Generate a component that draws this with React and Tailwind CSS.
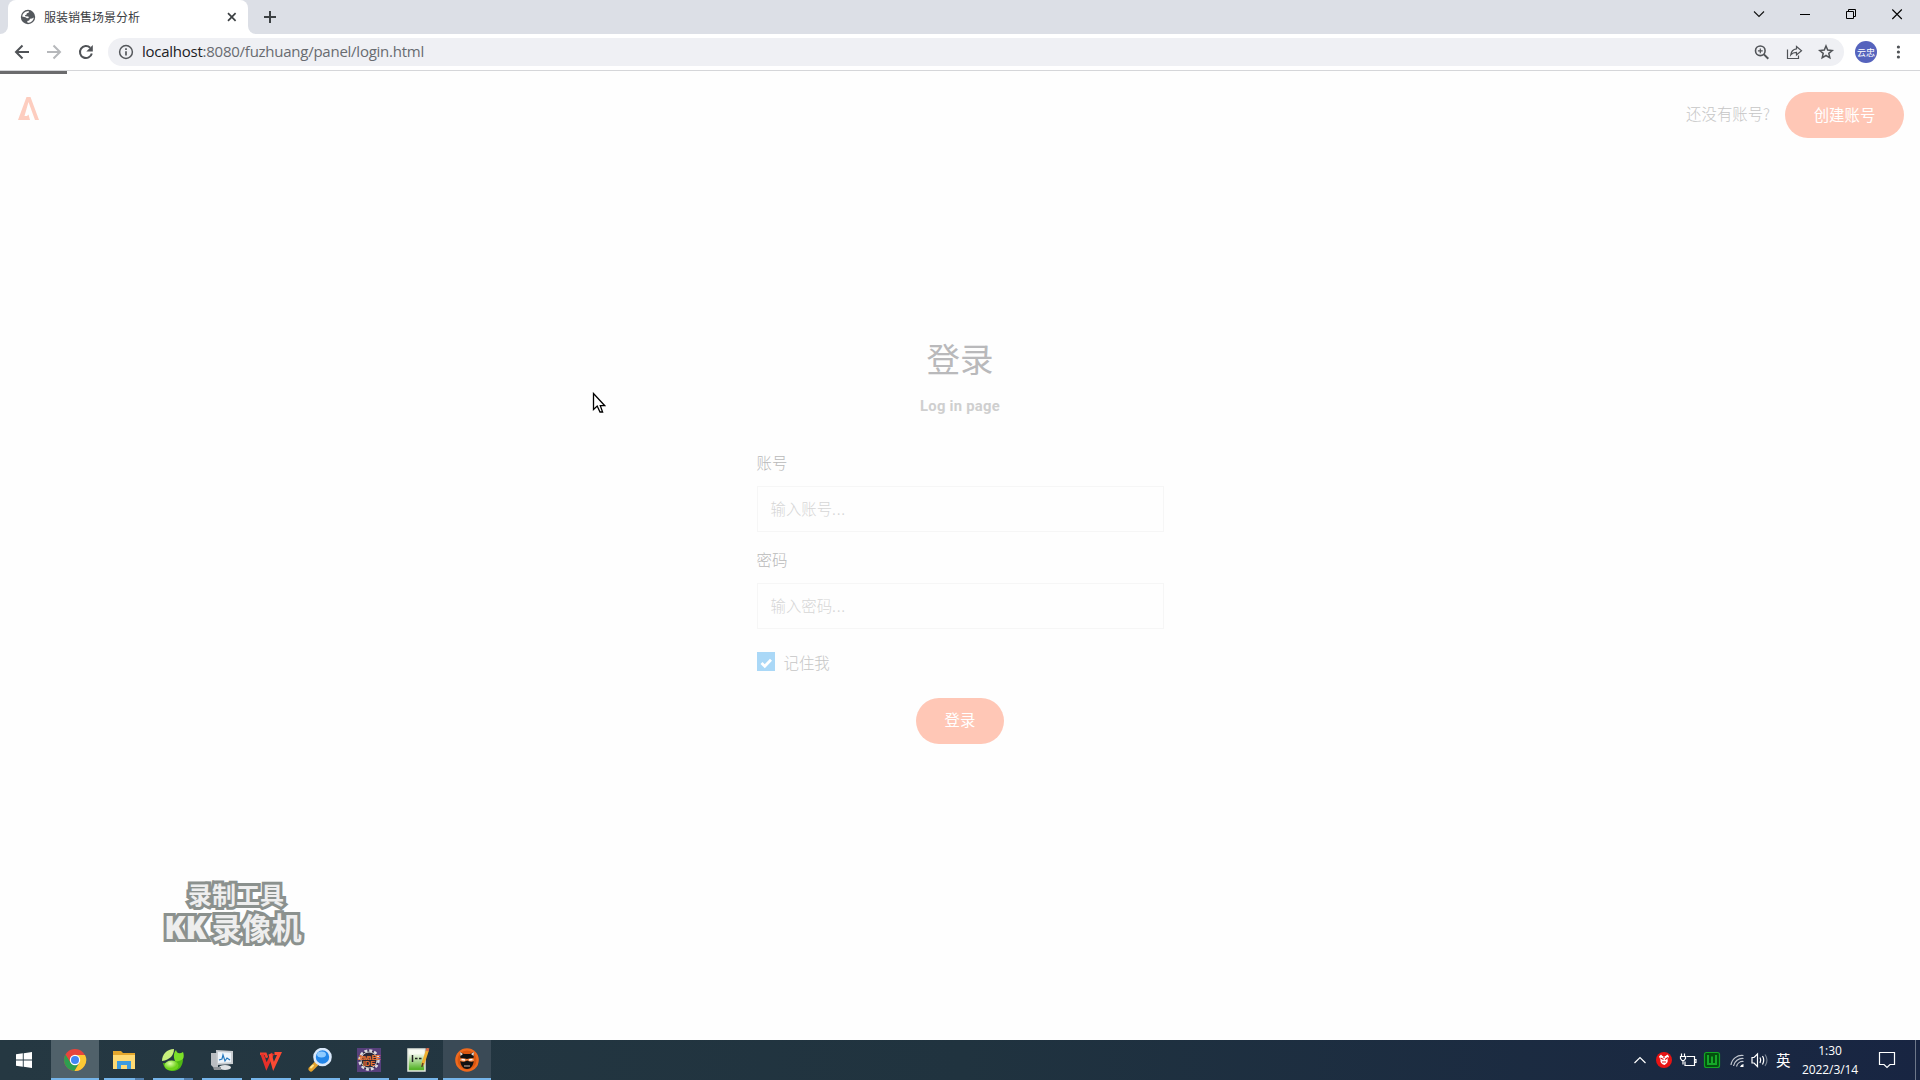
import React from "react";

const CJK = "font-['Noto_Sans_CJK_SC',sans-serif]";

function Globe() {
  return (
    <svg width="16" height="16" viewBox="0 0 16 16">
      <circle cx="8" cy="8" r="7.2" fill="#54585d" />
      <path d="M2.200 7.500C2.400 4.800 4.500 2.500 7.500 2.200L9 2.300L8.600 3.800L6.800 4.200L6.600 5.600L5 6.200L5.200 7.200L8.400 7.600L8.800 9L7 9.200L5.400 8.300z" fill="#fff" />
      <path d="M13.800 8.500C13.600 11.500 11 13.800 7.600 13.800L7.200 12L9.200 11.400L10 9.800L12 9.400z" fill="#fff" />
    </svg>
  );
}

function TabStrip() {
  return (
    <div className="flex h-[34px] bg-[#dcdfe6]">
      <div className="flex w-2 items-end bg-white">
        <div className="h-[34px] w-2 rounded-br-lg bg-[#dcdfe6]" />
      </div>
      <div className="flex w-[240px] items-center rounded-t-lg bg-white pl-3">
        <Globe />
        <span className="ml-[8px] w-[180px] whitespace-nowrap text-[12px] leading-[34px] text-[#3c4043] font-['Noto_Sans_CJK_SC',sans-serif]">服装销售场景分析</span>
        <svg width="14" height="14" viewBox="0 0 14 14" fill="none" stroke="#3c4043" strokeWidth="1.700"><path d="M4 3.200l7.600 7.600M11.600 3.200l-7.600 7.600" /></svg>
      </div>
      <div className="w-2 bg-white"><div className="h-[34px] w-2 rounded-bl-lg bg-[#dcdfe6]" /></div>
      <div className="flex items-center pl-[7px]">
        <svg width="14" height="14" viewBox="0 0 14 14" stroke="#3c4043" strokeWidth="2"><path d="M7 1v12M1 7h12" /></svg>
      </div>
      <div className="ml-auto flex h-[28px] items-center">
        <svg width="46" height="28" fill="none" stroke="#111" strokeWidth="1.100"><path d="M18 11.500l5 5l5-5" /></svg>
        <svg width="46" height="28" fill="none" stroke="#000"><path d="M18 14.500h10" /></svg>
        <svg width="46" height="28" fill="none" stroke="#000"><path d="M18.500 11.500h7v7h-7zM20.500 11.500v-2h7v7h-2" /></svg>
        <svg width="46" height="28" fill="none" stroke="#000" strokeWidth="1.100"><path d="M18.300 9.500l9.500 9.500M27.800 9.500l-9.500 9.500" /></svg>
      </div>
    </div>
  );
}

function Toolbar() {
  return (
    <div className="flex h-[37px] items-center border-b border-[#d5d6d9] bg-white">
      <svg width="108" height="36" fill="none" stroke="#505357" strokeWidth="2">
        <path d="M29 18H16.500M22.500 11.500L16 18l6.500 6.500" />
        <path d="M47 18h12.500M53.500 11.500L60 18l-6.500 6.500" stroke="#b6b8bb" />
        <path d="M90.200 13.800A6 6 0 1 0 91.800 19.500" />
        <path d="M92.800 11v6.500h-6.500z" fill="#505357" stroke="none" />
      </svg>
      <div className="flex h-7 w-[1736px] items-center rounded-full bg-[#eff0f4] pl-[10px]">
        <svg width="16" height="16" fill="none" stroke="#54575b" strokeWidth="1.500"><circle cx="8" cy="8" r="6.400" /><path d="M8 7.200v4.300M8 4.300v1.700" strokeWidth="1.700" /></svg>
        <span className="mb-0.5 ml-2 whitespace-nowrap text-[15px] leading-[26px] tracking-[-0.25px] text-[#686b70] font-['Open_Sans',sans-serif]"><span className="text-[#202124]">localhost</span>:8080/fuzhuang/panel/login.html</span>
        <svg width="94" height="28" className="ml-auto" fill="none" stroke="#505357" strokeWidth="1.600">
          <circle cx="10.300" cy="12.800" r="4.800" /><path d="M13.900 16.400l4.400 4.400" strokeWidth="2" /><path d="M10.300 10.400v4.800M7.900 12.800h4.800" strokeWidth="1.200" />
          <path d="M37.500 11.500v9h11v-3" strokeWidth="1.200" /><path d="M46.500 8.500l5 4.200l-5 4.200v-2.500c-2.600 0-4.300.7-5.800 2.600c.4-3.400 2.300-5.800 5.800-6.200z" strokeWidth="1.200" />
          <path d="M76 8l1.700 4.100l4.500.4l-3.400 2.900l1 4.400l-3.800-2.300l-3.800 2.300l1-4.400l-3.400-2.900l4.500-.4z" strokeWidth="1.500" />
        </svg>
      </div>
      <div className={`ml-[11px] flex size-[22px] items-center justify-center whitespace-nowrap rounded-full bg-[#5563bd] text-[9px] leading-none text-white ${CJK}`}>云忠</div>
      <svg width="8" height="18" className="ml-[17px]" fill="#505357"><circle cx="4.400" cy="4" r="1.600" /><circle cx="4.400" cy="9" r="1.600" /><circle cx="4.400" cy="14" r="1.600" /></svg>
    </div>
  );
}

function Field({ label, hint }) {
  return (
    <label className="flex flex-col">
      <span className="h-[20px] text-[15.4px] leading-[20px] text-[#b9b9b9]">{label}</span>
      <span className="mt-[14px] flex h-[46px] items-center border border-[#f6f6f6] px-[13px] text-[15.4px] text-[#d6d6d6]">{hint.slice(0, 4)}<span className="tracking-[0.8px]">{hint.slice(4)}</span></span>
    </label>
  );
}

function LoginPage() {
  return (
    <main className={`relative flex h-[969px] flex-col bg-[#fefefe] font-light ${CJK}`}>
      <div className="h-[3px] w-[67px] bg-[#6b6b6d]" />
      <header className="flex h-[64px] items-end justify-between pl-[17px] pr-4">
        <svg width="24" height="26" viewBox="0 0 24 26" className="mb-[16px]"><path d="M9.500 1h4L22 24h-4L11.500 6L7.500 20H10l1.500-1.500L13 24H1z" fill="#fdcdbf" /></svg>
        <div className="flex items-center">
          <span className="mb-[3px] mr-[15px] text-[15.400px] text-[#c6c6c6]">还没有账号?</span>
          <button className="h-[46px] w-[119px] rounded-full bg-[#ffc7b6] pb-[2px] text-[15.400px] font-normal leading-[44px] text-white">创建账号</button>
        </div>
      </header>
      <form className="mx-auto mt-[197px] flex w-[407px] flex-col">
        <h1 className="h-[46px] text-center text-[33.500px] font-normal leading-[46px] text-[#b9b9bb]">登录</h1>
        <p className="mt-[13px] h-6 text-center text-[14.800px] font-bold leading-6 tracking-[0.250px] text-[#cfcfcf] font-['Roboto',sans-serif]">Log in page</p>
        <div className="mt-[34px] flex flex-col gap-[17px]">
          <Field label="账号" hint="输入账号..." />
          <Field label="密码" hint="输入密码..." />
        </div>
        <label className="mt-[22px] flex h-6 items-center text-[15.400px] text-[#c6c6c6]">
          <svg width="18" height="19" className="mb-[3px] mr-[9px]"><path d="M0 0h18v19H0z" fill="#aad8f7" /><path d="M4.500 11l3.300 3.300l6.200-6.500" fill="none" stroke="#fff" strokeWidth="2.800" /></svg>
          记住我
        </label>
        <button type="button" className="mx-auto mt-[23px] h-[46px] w-[88px] rounded-full bg-[#ffc7b6] pb-[3px] text-[15.400px] font-normal leading-[43px] text-white">登录</button>
      </form>
      <div className="absolute left-[160px] top-[807px] flex w-[146px] flex-col items-center whitespace-nowrap font-bold text-[#eeeeee] [-webkit-text-stroke:6px_#8b918e] [paint-order:stroke_fill] [stroke-linejoin:round]">
        <span className="ml-1.5 text-[24px] leading-[32px]">录制工具</span>
        <span className="flex items-baseline text-[30px] leading-[32px]"><span className="mr-[5px] text-[31px] font-extrabold font-['Open_Sans',sans-serif]">KK</span>录像机</span>
      </div>
      <svg width="14" height="22" viewBox="0 0 14 22" className="absolute left-[592px] top-[321px]"><path d="M1.500 1.500v16l3.700-3.500l2.800 6h2.600l-2.300-6.300h4.500z" fill="#fff" stroke="#000" strokeWidth="1.300" /></svg>
    </main>
  );
}

const apps = [
  { name: "chrome", full: true, tone: "bg-[#50616a]", art: (
    <g><circle cx="12" cy="12" r="11" fill="#e8453c" /><path d="M2.500 6.500A11 11 0 0 0 11.500 23L16.500 14.500L12 12L7.500 14.500z" fill="#2f9e4f" /><path d="M11.500 23A11 11 0 0 0 22 7H12l4.500 7.500z" fill="#fcc934" /><circle cx="12" cy="12" r="5.200" fill="#fff" /><circle cx="12" cy="12" r="4" fill="#4285f4" /></g>) },
  { name: "explorer", split: true, art: (
    <g><path d="M1 3h8l2 2h12v16H1z" fill="#e5a72c" /><path d="M1 7h22v14H1z" fill="#ffda73" /><path d="M5 13h14v8h-4v-4H9v4H5z" fill="#3d9be0" /></g>) },
  { name: "frog", split: true, art: (
    <g><defs><radialGradient id="leaf" cx=".4" cy=".3"><stop stopColor="#e0ffa8" /><stop offset="1" stopColor="#6fd31c" /></radialGradient></defs><path d="M1 13C1 6 6 1 13 1C13 7 9 12 1 13z" fill="#c9f07c" /><path d="M15 2C16 6 19 6 22 4C24 9 22 14 16 15C12 12 12 5 15 2z" fill="#7ce028" /><path d="M2 15c4 1 7-3 10-2c4 1 7 0 10-2c0 7-4 12-10 12S3 20 2 15z" fill="#4fb814" /><ellipse cx="10.500" cy="17.500" rx="7" ry="5" fill="url(#leaf)" /></g>) },
  { name: "monitor", art: (
    <g><path d="M1 5h7v14H3l-2-2z" fill="#b9bdc1" /><path d="M6 2l17 1v13l-16 1z" fill="#c9cdd1" /><path d="M8 4l13 .8v9.500L8 15z" fill="#eef5fb" /><path d="M9 12l3-1l1-4l2 6l2-3l3 2" stroke="#2377bd" fill="none" strokeWidth="1.200" /><ellipse cx="15" cy="19.500" rx="6" ry="2.500" fill="#e0e2e4" /><path d="M3 19h8v3H4z" fill="#8f9498" /></g>) },
  { name: "wps", art: (
    <g fill="none" strokeWidth="3.200"><path d="M1 5.800h5.500l1.500 4" stroke="#ef4130" strokeWidth="2.600" /><path d="M3 6l4.500 12.500l6-13" stroke="#e7302a" /><path d="M11 6l3.500 12.500L20.500 5.500h-5" stroke="#fb4a33" /></g>) },
  { name: "search", art: (
    <g><path d="M8 16l-5 5" stroke="#e2a12d" strokeWidth="5" strokeLinecap="round" /><path d="M5 17.500l-2 2" stroke="#ffe58c" strokeWidth="2" strokeLinecap="round" /><circle cx="14.500" cy="9" r="8" fill="#2386e9" stroke="#d9e8fa" strokeWidth="2.600" /><ellipse cx="13.500" cy="6.500" rx="4.500" ry="3" fill="#8fcbff" /></g>) },
  { name: "javaee", art: (
    <g><path d="M0 0h24v24H0z" fill="#57407c" /><circle cx="12" cy="12" r="9.500" fill="#292636" stroke="#dedbe0" strokeWidth="2.500" strokeDasharray="3 1.970" /><circle cx="12" cy="12" r="8" fill="#292636" stroke="#c9c6cd" /><text x="12" y="11.500" textAnchor="middle" textLength="23" fontSize="7.500" fontWeight="700" fill="#ef7733" fontFamily="Liberation Sans">Java EE</text><text x="12" y="18" textAnchor="middle" fontSize="7.500" fontWeight="700" fill="#ef7733" fontFamily="Liberation Sans">IDE</text></g>) },
  { name: "notepad", art: (
    <g transform="translate(-1 0)"><defs><linearGradient id="pad" x2="0" y2="1"><stop offset=".2" stopColor="#f7faf2" /><stop offset=".9" stopColor="#58b42c" /></linearGradient></defs><path d="M3 1h17v22H3z" fill="url(#pad)" stroke="#e3e7df" strokeWidth="1.500" /><path d="M7.500 7v7M10 10.500h2.500M14 10.500h2.500" stroke="#222" strokeWidth="1.500" /><path d="M22.500 2l-5 15" stroke="#f0b030" strokeWidth="3" /><path d="M18 15l-1.200 4" stroke="#5c4320" strokeWidth="1.500" /><path d="M23 0l-1 3" stroke="#d66b4a" strokeWidth="3" /></g>) },
  { name: "kk", full: true, tone: "bg-[#3a4a56]", art: (
    <g><circle cx="12" cy="12" r="11.800" fill="#ef6a1e" /><circle cx="12" cy="12" r="9.500" fill="#d9560f" /><path d="M5 4l4 2h6l4-2l-.5 6c1 6-2 11-6.500 11S4.500 16 5.500 10z" fill="#111" /><path d="M5 4l3 2l-2.500 2zM19 4l-3 2l2.500 2z" fill="#f3ddd0" /><path d="M5 10.500c4-.5 5 .5 7 .5s3-1 7-.5v2.500c-3 1.500-5.500 0-7-.5c-1.500 1-4 2-7 .5z" fill="#f58540" /><path d="M6.500 11.500l3.500 .5M17.500 11.500l-3.500 .5" stroke="#fff" strokeWidth="1.300" /><path d="M9 18h6" stroke="#b9a294" strokeWidth="1.200" /></g>) },
];

function Underline({ app }) {
  if (app.full) return <div className="h-0.5 w-12 bg-[#76b5ea]" />;
  if (app.split) return <div className="flex h-0.5 w-10"><div className="w-[31px] bg-[#76b5ea]" /><div className="w-[9px] bg-[#4f7daa]" /></div>;
  return <div className="h-0.5 w-10 bg-[#76b5ea]" />;
}

function Taskbar() {
  return (
    <footer className="flex h-10 bg-linear-to-r from-[#253842] via-[#20333f] to-[#182542] text-white">
      <div className="flex w-[51px] items-center pl-4">
        <svg width="16" height="16" fill="#fff"><path d="M0 2.300L6.800 1.300v6.300H0zM7.700 1.200L16 0v7.600H7.700zM0 8.500h6.800v6.300L0 13.800zM7.700 8.500H16V16l-8.300-1.200z" /></svg>
      </div>
      <div className="flex gap-px">
        {apps.map((app) => (
          <div key={app.name} className={`flex h-10 w-12 flex-col items-center ${app.tone || ""}`}>
            <div className="flex h-[38px] items-center pt-0.5"><svg width="24" height="24" viewBox="0 0 24 24">{app.art}</svg></div>
            <Underline app={app} />
          </div>
        ))}
      </div>
      <div className="ml-auto flex items-center">
        <svg width="148" height="40" fill="none" stroke="#fff" strokeWidth="1.200">
          <path d="M6.500 23l5.500-5.500l5.500 5.500" />
          <circle cx="36" cy="20" r="8" fill="#e81313" stroke="none" />
          <path d="M31 16.500l2-2l1.500 1.500h3l2-1.500l1.500 2l-1.500 3c1 2-.5 4-3 5.500c-3-1-4.500-2.500-4-5z" fill="#fff" stroke="none" />
          <path d="M32.500 18l3 1.500M40 17.500l-3 2M34 22h4M36 15v3" stroke="#e81313" />
          <path d="M58.500 16.500h8v9h-9.500v-4M66.500 19.500h1.500v3h-1.500M53.500 13.500v3M56.500 13.500v3M52.500 16.500h5v2l-1.500 2h-2l-1.500-2zM55 20.500v4" />
          <rect x="76.500" y="12.500" width="15" height="15" rx="2" fill="#04500f" stroke="#12a524" /><path d="M80 15v9h8v-9M84 16.500v7" stroke="#16a829" strokeWidth="2" />
          <path d="M103 25a11 11 0 0 1 12.500-9.500M105.500 26a9 9 0 0 1 10-7.500M108.500 26.500a6.500 6.500 0 0 1 7-5" stroke="#c3c8d0" /><path d="M112 27a4 4 0 0 1 3.500-3v3z" fill="#fff" stroke="none" />
          <path d="M124 17.500h2l3.500-3.500v12.500l-3.500-3.500h-2z" /><path d="M132 17.500q1.500 2.500 0 5.500M134.500 16q2.500 4 0 8.500" /><path d="M137 14.500q4 5.500 0 11.500" stroke="#76808f" />
        </svg>
        <span className={`w-[29px] whitespace-nowrap text-[14.500px] leading-10 ${CJK}`}>英</span>
        <div className="-ml-[8px] flex w-[66px] flex-col items-center whitespace-nowrap text-[12px] leading-[19px] tracking-[-0.100px] font-['Open_Sans',sans-serif]">
          <span>1:30</span><span>2022/3/14</span>
        </div>
        <svg width="57" height="40" fill="none" stroke="#fff" strokeWidth="1.200"><path d="M16.500 12.500h15v12h-4.500l-3 3l-3-3h-4.500z" /><path d="M52.500 0v40" stroke="#6d7789" strokeWidth="1" /></svg>
      </div>
    </footer>
  );
}

export default function App() {
  return (
    <div className="flex h-[1080px] w-[1920px] flex-col overflow-hidden bg-white">
      <TabStrip />
      <Toolbar />
      <LoginPage />
      <Taskbar />
    </div>
  );
}
